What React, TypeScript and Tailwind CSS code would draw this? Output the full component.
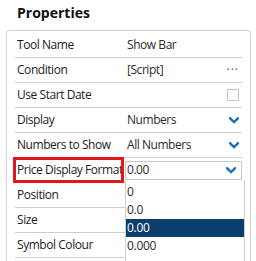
import React from "react";

const Chevron = () => (
  <svg width="10" height="7" viewBox="0 0 10 7" className="block">
    <path d="M1 1.2 L5 5 L9 1.2" stroke="#1f6fb8" strokeWidth="2.4" fill="none" strokeLinecap="square" />
  </svg>
);

type Row = { label: string; value?: React.ReactNode; right?: React.ReactNode; select?: boolean };

export default function App() {
  const rows: Row[] = [
    { label: "Tool Name", value: "Show Bar" },
    { label: "Condition", value: "[Script]", right: <span className="text-[12px] tracking-[1px] text-[#555] leading-none">···</span> },
    { label: "Use Start Date", right: <div className="w-[12px] h-[12px] border border-[#c4c4c4] bg-white" /> },
    { label: "Display", value: "Numbers", right: <Chevron /> },
    { label: "Numbers to Show", value: "All Numbers", right: <Chevron /> },
    { label: "Price Display Format", select: true },
    { label: "Position" },
    { label: "Size" },
    { label: "Symbol Colour" },
  ];
  return (
    <div className="relative w-[256px] h-[261px] overflow-hidden bg-white" style={{ fontFamily: '"Open Sans", sans-serif' }}>
      <div className="h-[30px] pl-[17px] pt-[2px] text-[14px] font-bold text-[#111] leading-[22px]">Properties</div>
      <div className="ml-[6px] w-[245px] h-[260px] border border-[#d2d2d2] rounded-[3px] pt-[2px] pl-[8px] pr-[8px]">
        {rows.map((r) => (
          <div key={r.label} className="relative flex items-center h-[25px] border-b border-[#cfcfcf] text-[12px] tracking-[-0.45px] text-[#1c1c1c]">
            <div className="w-[112px] shrink-0 pl-[2px] whitespace-nowrap">{r.label}</div>
            {r.select ? (
              <div className="relative flex items-center justify-between h-[19px] w-[119px] -ml-[2px] border border-[#c8c8c8] bg-white pl-[1px] pr-[5px] text-[#2b2b2b]">
                <span>0.00</span>
                <Chevron />
              </div>
            ) : (
              <div className="flex flex-1 items-center justify-between pr-[3px] text-[#2b2b2b]">
                <span>{r.value}</span>
                {r.right}
              </div>
            )}
          </div>
        ))}
      </div>
      <div className="absolute left-[13px] top-[157px] w-[111px] h-[26px] border-[3px] border-[#e0161e]" />
      <div className="absolute left-[125px] top-[180px] w-[120px] h-[90px] bg-white border-l border-r border-[#cfcfcf] pt-[3px] text-[12px] tracking-[-0.3px] text-[#2b2b2b]" style={{ fontFamily: '"Open Sans", sans-serif' }}>
        {["0", "0.0", "0.00", "0.000"].map((o) => (
          <div key={o} className={`h-[18px] leading-[18px] pl-[1px] ${o === "0.00" ? "bg-[#0b3d6d] text-white" : ""}`}>{o}</div>
        ))}
      </div>
    </div>
  );
}
